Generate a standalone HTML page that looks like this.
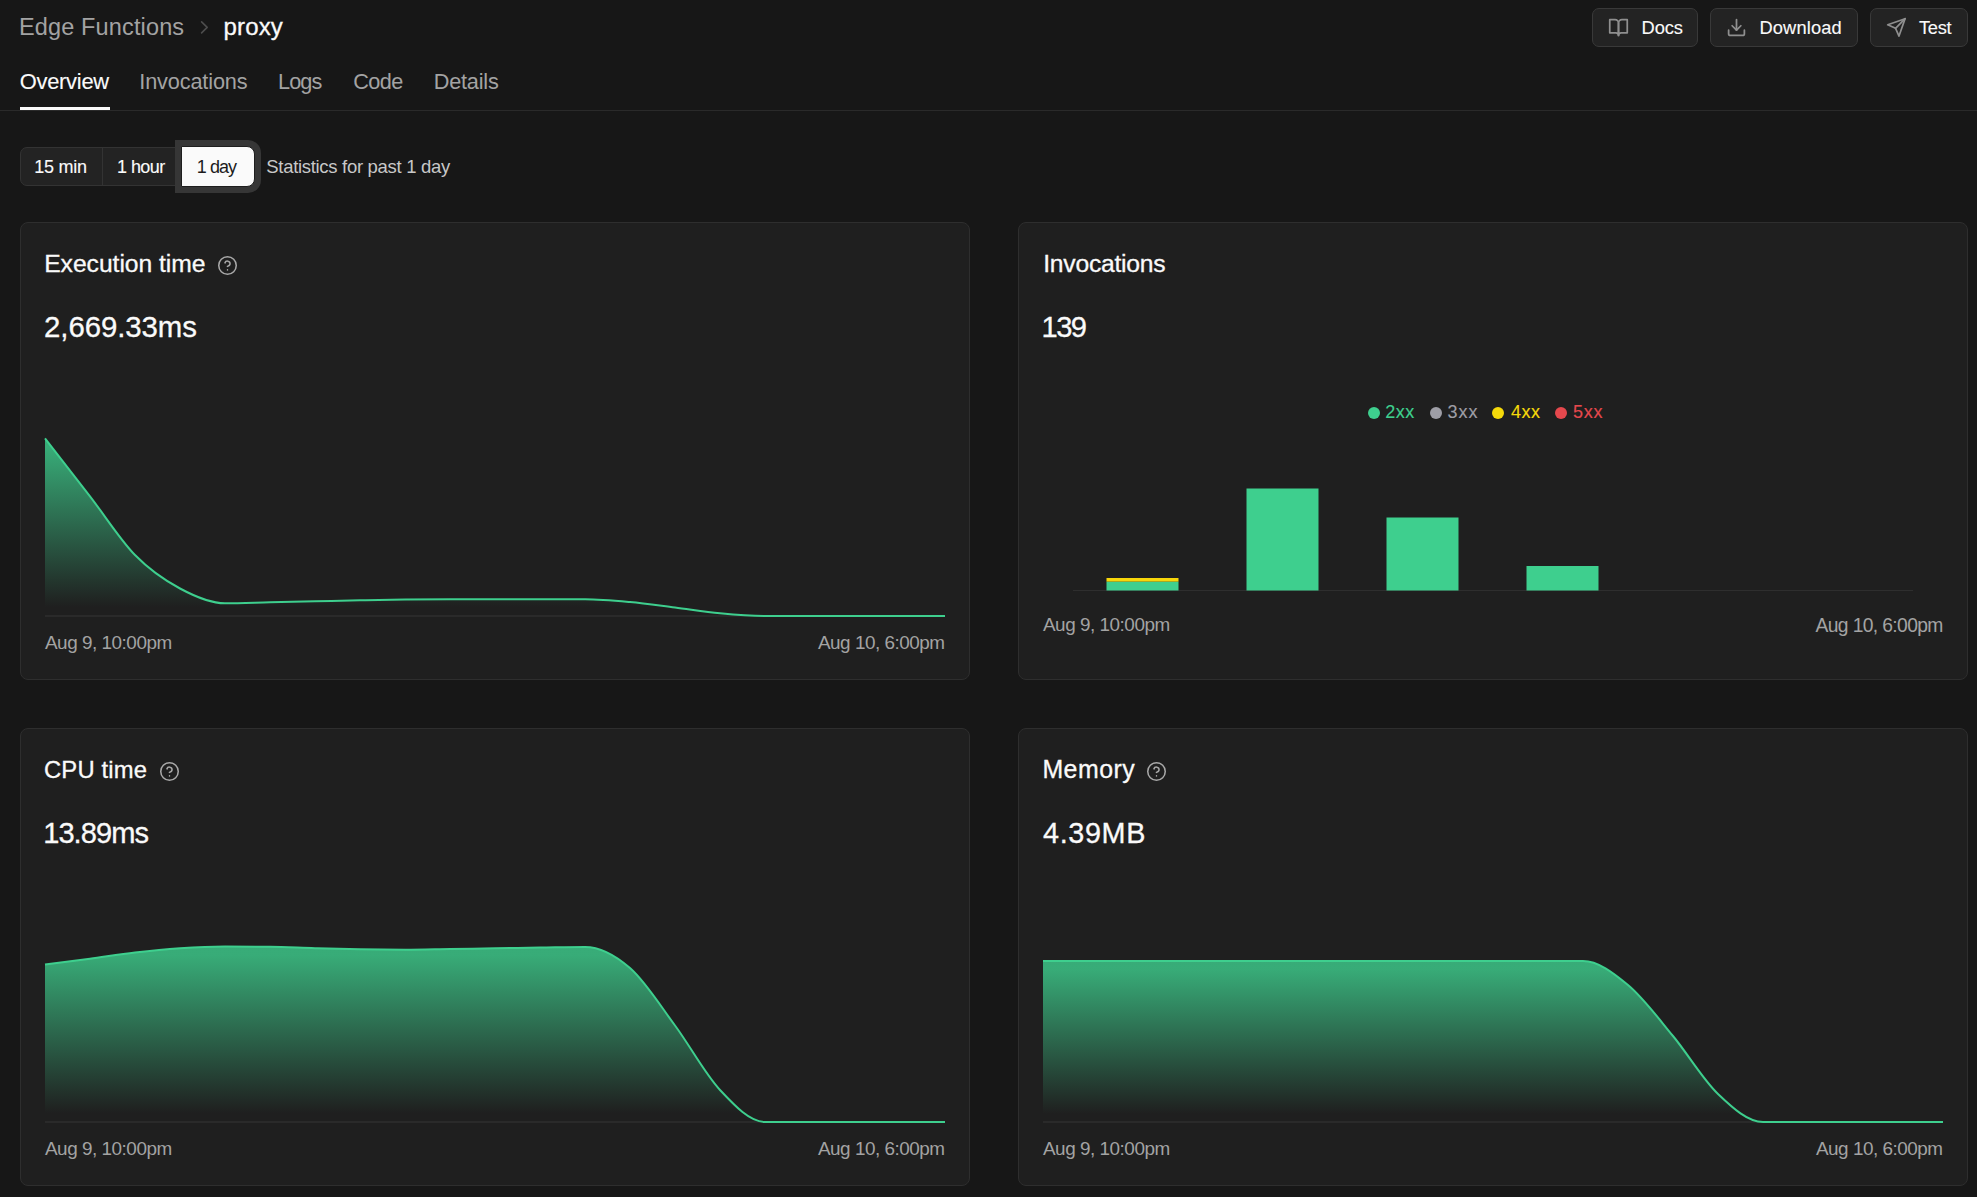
<!DOCTYPE html>
<html><head><meta charset="utf-8"><title>Edge Functions - proxy</title>
<style>
html,body{margin:0;padding:0;}
body{width:1977px;height:1197px;overflow:hidden;background:#171717;position:relative;font-family:"Liberation Sans", sans-serif;}
.t{position:absolute;white-space:nowrap;}
</style></head><body>
<div class="t" style="left:19.00px;top:16.40px;font-size:23.5px;line-height:23.5px;letter-spacing:0.138px;color:#a3a3a3;">Edge Functions</div>
<svg style="position:absolute;left:0;top:0" width="260" height="50"><path d="M201.6,21.9L207.2,27.4L201.6,32.9" fill="none" stroke="#4d4d4d" stroke-width="1.6" stroke-linecap="round" stroke-linejoin="round"/></svg>
<div class="t" style="left:223.50px;top:15.40px;font-size:24.0px;line-height:24.0px;letter-spacing:0.150px;color:#fafafa;-webkit-text-stroke:0.3px currentColor;">proxy</div>
<div style="position:absolute;left:1592px;top:8px;width:106px;height:39px;box-sizing:border-box;background:#232323;border:1px solid #393939;border-radius:7px;"></div>
<div style="position:absolute;left:1710px;top:8px;width:148px;height:39px;box-sizing:border-box;background:#232323;border:1px solid #393939;border-radius:7px;"></div>
<div style="position:absolute;left:1870px;top:8px;width:98px;height:39px;box-sizing:border-box;background:#232323;border:1px solid #393939;border-radius:7px;"></div>
<svg style="position:absolute;left:1608px;top:17px" width="21" height="21" viewBox="0 0 24 24" fill="none" stroke="#8f8f8f" stroke-width="2" stroke-linecap="round" stroke-linejoin="round"><path d="M2 3h6a4 4 0 0 1 4 4v14a3 3 0 0 0-3-3H2z"/><path d="M22 3h-6a4 4 0 0 0-4 4v14a3 3 0 0 1 3-3h7z"/></svg>
<svg style="position:absolute;left:1726px;top:16.6px" width="21" height="21" viewBox="0 0 24 24" fill="none" stroke="#8f8f8f" stroke-width="2" stroke-linecap="round" stroke-linejoin="round"><path d="M21 15v4a2 2 0 0 1-2 2H5a2 2 0 0 1-2-2v-4"/><polyline points="7 10 12 15 17 10"/><line x1="12" y1="15" x2="12" y2="3"/></svg>
<svg style="position:absolute;left:1885.8px;top:16.6px" width="20.8" height="20.8" viewBox="0 0 24 24" fill="none" stroke="#8f8f8f" stroke-width="2" stroke-linecap="round" stroke-linejoin="round"><line x1="22" y1="2" x2="11" y2="13"/><polygon points="22 2 15 22 11 13 2 9 22 2"/></svg>
<div class="t" style="left:1641.50px;top:19.20px;font-size:18.3px;line-height:18.3px;letter-spacing:-0.067px;color:#fafafa;-webkit-text-stroke:0.12px currentColor;">Docs</div>
<div class="t" style="left:1759.40px;top:19.20px;font-size:18.3px;line-height:18.3px;letter-spacing:0.143px;color:#fafafa;-webkit-text-stroke:0.12px currentColor;">Download</div>
<div class="t" style="left:1919.00px;top:19.20px;font-size:18.3px;line-height:18.3px;letter-spacing:-0.333px;color:#fafafa;-webkit-text-stroke:0.12px currentColor;">Test</div>
<div class="t" style="left:19.70px;top:70.81px;font-size:21.9px;line-height:21.9px;letter-spacing:-0.257px;color:#fafafa;-webkit-text-stroke:0.12px currentColor;">Overview</div>
<div class="t" style="left:139.30px;top:70.90px;font-size:21.7px;line-height:21.7px;letter-spacing:-0.140px;color:#a3a3a3;">Invocations</div>
<div class="t" style="left:278.00px;top:70.90px;font-size:21.7px;line-height:21.7px;letter-spacing:-0.933px;color:#a3a3a3;">Logs</div>
<div class="t" style="left:353.20px;top:70.90px;font-size:21.7px;line-height:21.7px;letter-spacing:-0.533px;color:#a3a3a3;">Code</div>
<div class="t" style="left:433.70px;top:70.90px;font-size:21.7px;line-height:21.7px;letter-spacing:-0.200px;color:#a3a3a3;">Details</div>
<div style="position:absolute;left:20px;top:107px;width:90px;height:3px;box-sizing:border-box;background:#fafafa;"></div>
<div style="position:absolute;left:0px;top:110px;width:1977px;height:1px;box-sizing:border-box;background:#2a2a2a;"></div>
<div style="position:absolute;left:20px;top:147px;width:162px;height:39px;box-sizing:border-box;background:#232323;border:1px solid #333333;border-radius:7px 0 0 7px;"></div>
<div style="position:absolute;left:102px;top:147px;width:1px;height:39px;box-sizing:border-box;background:#333333;"></div>
<div style="position:absolute;left:175px;top:140px;width:86px;height:53px;box-sizing:border-box;background:#363636;border-radius:0 13px 13px 0;"></div>
<div style="position:absolute;left:181px;top:146px;width:74px;height:41px;box-sizing:border-box;background:#fafafa;border:1px solid #1e1e1e;border-radius:0 8px 8px 0;"></div>
<div class="t" style="left:34.30px;top:157.71px;font-size:18.0px;line-height:18.0px;letter-spacing:-0.280px;color:#fafafa;-webkit-text-stroke:0.12px currentColor;">15 min</div>
<div class="t" style="left:117.00px;top:157.71px;font-size:18.0px;line-height:18.0px;letter-spacing:-0.560px;color:#fafafa;-webkit-text-stroke:0.12px currentColor;">1 hour</div>
<div class="t" style="left:196.80px;top:157.71px;font-size:18.0px;line-height:18.0px;letter-spacing:-0.950px;color:#1c1c1c;">1 day</div>
<div class="t" style="left:266.30px;top:158.10px;font-size:18.5px;line-height:18.5px;letter-spacing:-0.308px;color:#c8c8c8;">Statistics for past 1 day</div>
<div style="position:absolute;left:20px;top:222px;width:950px;height:458px;box-sizing:border-box;background:#1f1f1f;border:1px solid #2e2e2e;border-radius:8px;"></div>
<div style="position:absolute;left:1018px;top:222px;width:950px;height:458px;box-sizing:border-box;background:#1f1f1f;border:1px solid #2e2e2e;border-radius:8px;"></div>
<div style="position:absolute;left:20px;top:728px;width:950px;height:458px;box-sizing:border-box;background:#1f1f1f;border:1px solid #2e2e2e;border-radius:8px;"></div>
<div style="position:absolute;left:1018px;top:728px;width:950px;height:458px;box-sizing:border-box;background:#1f1f1f;border:1px solid #2e2e2e;border-radius:8px;"></div>
<div class="t" style="left:44.20px;top:252.11px;font-size:24.7px;line-height:24.7px;letter-spacing:-0.046px;color:#fafafa;-webkit-text-stroke:0.3px currentColor;">Execution time</div>
<div class="t" style="left:44.10px;top:312.40px;font-size:29.4px;line-height:29.4px;letter-spacing:-0.089px;color:#fafafa;-webkit-text-stroke:0.3px currentColor;">2,669.33ms</div>
<div class="t" style="left:1043.20px;top:252.11px;font-size:24.7px;line-height:24.7px;letter-spacing:-0.240px;color:#fafafa;-webkit-text-stroke:0.3px currentColor;">Invocations</div>
<div class="t" style="left:1041.50px;top:313.21px;font-size:29.1px;line-height:29.1px;letter-spacing:-1.500px;color:#fafafa;-webkit-text-stroke:0.3px currentColor;">139</div>
<div class="t" style="left:44.00px;top:758.41px;font-size:23.8px;line-height:23.8px;letter-spacing:0.171px;color:#fafafa;-webkit-text-stroke:0.3px currentColor;">CPU time</div>
<div class="t" style="left:43.20px;top:819.11px;font-size:29.1px;line-height:29.1px;letter-spacing:-0.967px;color:#fafafa;-webkit-text-stroke:0.3px currentColor;">13.89ms</div>
<div class="t" style="left:1042.40px;top:757.11px;font-size:24.9px;line-height:24.9px;letter-spacing:0.480px;color:#fafafa;-webkit-text-stroke:0.3px currentColor;">Memory</div>
<div class="t" style="left:1043.10px;top:819.00px;font-size:28.8px;line-height:28.8px;letter-spacing:0.600px;color:#fafafa;-webkit-text-stroke:0.3px currentColor;">4.39MB</div>
<svg style="position:absolute;left:217.0px;top:255.0px" width="21" height="21" viewBox="0 0 24 24" fill="none" stroke="#a8a8a8" stroke-width="1.75" stroke-linecap="round" stroke-linejoin="round"><circle cx="12" cy="12" r="10"/><path d="M9.09 9a3 3 0 0 1 5.83 1c0 2-3 3-3 3"/><path d="M12 17h.01"/></svg>
<svg style="position:absolute;left:159.0px;top:761.0px" width="21" height="21" viewBox="0 0 24 24" fill="none" stroke="#a8a8a8" stroke-width="1.75" stroke-linecap="round" stroke-linejoin="round"><circle cx="12" cy="12" r="10"/><path d="M9.09 9a3 3 0 0 1 5.83 1c0 2-3 3-3 3"/><path d="M12 17h.01"/></svg>
<svg style="position:absolute;left:1146.0px;top:761.0px" width="21" height="21" viewBox="0 0 24 24" fill="none" stroke="#a8a8a8" stroke-width="1.75" stroke-linecap="round" stroke-linejoin="round"><circle cx="12" cy="12" r="10"/><path d="M9.09 9a3 3 0 0 1 5.83 1c0 2-3 3-3 3"/><path d="M12 17h.01"/></svg>
<div class="t" style="left:45.00px;top:634.10px;font-size:18.9px;line-height:18.9px;letter-spacing:-0.477px;color:#a3a3a3;">Aug 9, 10:00pm</div>
<div class="t" style="left:818.00px;top:634.10px;font-size:18.9px;line-height:18.9px;letter-spacing:-0.492px;color:#a3a3a3;">Aug 10, 6:00pm</div>
<div class="t" style="left:1043.00px;top:616.01px;font-size:18.9px;line-height:18.9px;letter-spacing:-0.477px;color:#a3a3a3;">Aug 9, 10:00pm</div>
<div class="t" style="left:1815.50px;top:615.50px;font-size:19.3px;line-height:19.3px;letter-spacing:-0.631px;color:#a3a3a3;">Aug 10, 6:00pm</div>
<div class="t" style="left:45.00px;top:1140.01px;font-size:18.9px;line-height:18.9px;letter-spacing:-0.477px;color:#a3a3a3;">Aug 9, 10:00pm</div>
<div class="t" style="left:818.00px;top:1140.01px;font-size:18.9px;line-height:18.9px;letter-spacing:-0.492px;color:#a3a3a3;">Aug 10, 6:00pm</div>
<div class="t" style="left:1043.00px;top:1140.01px;font-size:18.9px;line-height:18.9px;letter-spacing:-0.477px;color:#a3a3a3;">Aug 9, 10:00pm</div>
<div class="t" style="left:1816.00px;top:1140.01px;font-size:18.9px;line-height:18.9px;letter-spacing:-0.492px;color:#a3a3a3;">Aug 10, 6:00pm</div>
<svg style="position:absolute;left:0;top:0" width="1977" height="1197"><defs><linearGradient id="g" x1="0" y1="0" x2="0" y2="1"><stop offset="5%" stop-color="#3ecf8e" stop-opacity="0.8"/><stop offset="95%" stop-color="#3ecf8e" stop-opacity="0"/></linearGradient></defs><line x1="45" y1="616" x2="945" y2="616" stroke="#363636" stroke-width="1"/><path d="M45.00,438.30C60.00,457.57,75.00,476.85,90.00,496.30C105.00,515.75,120.00,539.63,135.00,555.00C150.00,570.37,165.00,580.45,180.00,588.50C195.00,596.55,210.00,603.30,225.00,603.30C240.00,603.30,255.00,602.63,270.00,602.30C285.00,601.97,300.00,601.63,315.00,601.30C330.00,600.97,345.00,600.60,360.00,600.30C375.00,600.00,390.00,599.68,405.00,599.50C420.00,599.32,435.00,599.20,450.00,599.20C465.00,599.20,480.00,599.20,495.00,599.20C510.00,599.20,525.00,599.20,540.00,599.20C555.00,599.20,570.00,599.20,585.00,599.20C600.00,599.20,615.00,600.62,630.00,602.00C645.00,603.38,660.00,605.62,675.00,607.50C690.00,609.38,705.00,611.88,720.00,613.30C735.00,614.72,750.00,616.00,765.00,616.00C780.00,616.00,795.00,616.00,810.00,616.00C825.00,616.00,840.00,616.00,855.00,616.00C870.00,616.00,885.00,616.00,900.00,616.00C915.00,616.00,930.00,616.00,945.00,616.00L945,616L45,616Z" fill="url(#g)"/><path d="M45.00,438.30C60.00,457.57,75.00,476.85,90.00,496.30C105.00,515.75,120.00,539.63,135.00,555.00C150.00,570.37,165.00,580.45,180.00,588.50C195.00,596.55,210.00,603.30,225.00,603.30C240.00,603.30,255.00,602.63,270.00,602.30C285.00,601.97,300.00,601.63,315.00,601.30C330.00,600.97,345.00,600.60,360.00,600.30C375.00,600.00,390.00,599.68,405.00,599.50C420.00,599.32,435.00,599.20,450.00,599.20C465.00,599.20,480.00,599.20,495.00,599.20C510.00,599.20,525.00,599.20,540.00,599.20C555.00,599.20,570.00,599.20,585.00,599.20C600.00,599.20,615.00,600.62,630.00,602.00C645.00,603.38,660.00,605.62,675.00,607.50C690.00,609.38,705.00,611.88,720.00,613.30C735.00,614.72,750.00,616.00,765.00,616.00C780.00,616.00,795.00,616.00,810.00,616.00C825.00,616.00,840.00,616.00,855.00,616.00C870.00,616.00,885.00,616.00,900.00,616.00C915.00,616.00,930.00,616.00,945.00,616.00" fill="none" stroke="#3ecf8e" stroke-width="2"/><line x1="45" y1="1122" x2="945" y2="1122" stroke="#363636" stroke-width="1"/><path d="M45.00,964.60C60.00,962.66,75.00,960.72,90.00,958.70C105.00,956.68,120.00,954.25,135.00,952.50C150.00,950.75,165.00,949.22,180.00,948.20C195.00,947.18,210.00,946.40,225.00,946.40C240.00,946.40,255.00,946.53,270.00,946.80C285.00,947.07,300.00,947.78,315.00,948.20C330.00,948.62,345.00,949.05,360.00,949.30C375.00,949.55,390.00,949.70,405.00,949.70C420.00,949.70,435.00,949.23,450.00,949.00C465.00,948.77,480.00,948.53,495.00,948.30C510.00,948.07,525.00,947.83,540.00,947.60C555.00,947.37,570.00,946.90,585.00,946.90C600.00,946.90,615.00,954.90,630.00,968.00C645.00,981.10,660.00,1005.17,675.00,1025.50C690.00,1045.83,705.00,1073.92,720.00,1090.00C735.00,1106.08,750.00,1122.00,765.00,1122.00C780.00,1122.00,795.00,1122.00,810.00,1122.00C825.00,1122.00,840.00,1122.00,855.00,1122.00C870.00,1122.00,885.00,1122.00,900.00,1122.00C915.00,1122.00,930.00,1122.00,945.00,1122.00L945,1122L45,1122Z" fill="url(#g)"/><path d="M45.00,964.60C60.00,962.66,75.00,960.72,90.00,958.70C105.00,956.68,120.00,954.25,135.00,952.50C150.00,950.75,165.00,949.22,180.00,948.20C195.00,947.18,210.00,946.40,225.00,946.40C240.00,946.40,255.00,946.53,270.00,946.80C285.00,947.07,300.00,947.78,315.00,948.20C330.00,948.62,345.00,949.05,360.00,949.30C375.00,949.55,390.00,949.70,405.00,949.70C420.00,949.70,435.00,949.23,450.00,949.00C465.00,948.77,480.00,948.53,495.00,948.30C510.00,948.07,525.00,947.83,540.00,947.60C555.00,947.37,570.00,946.90,585.00,946.90C600.00,946.90,615.00,954.90,630.00,968.00C645.00,981.10,660.00,1005.17,675.00,1025.50C690.00,1045.83,705.00,1073.92,720.00,1090.00C735.00,1106.08,750.00,1122.00,765.00,1122.00C780.00,1122.00,795.00,1122.00,810.00,1122.00C825.00,1122.00,840.00,1122.00,855.00,1122.00C870.00,1122.00,885.00,1122.00,900.00,1122.00C915.00,1122.00,930.00,1122.00,945.00,1122.00" fill="none" stroke="#3ecf8e" stroke-width="2"/><line x1="1043" y1="1122" x2="1943" y2="1122" stroke="#363636" stroke-width="1"/><path d="M1043.00,961.00C1058.00,961.00,1073.00,961.00,1088.00,961.00C1103.00,961.00,1118.00,961.00,1133.00,961.00C1148.00,961.00,1163.00,961.00,1178.00,961.00C1193.00,961.00,1208.00,961.00,1223.00,961.00C1238.00,961.00,1253.00,961.00,1268.00,961.00C1283.00,961.00,1298.00,961.00,1313.00,961.00C1328.00,961.00,1343.00,961.00,1358.00,961.00C1373.00,961.00,1388.00,961.00,1403.00,961.00C1418.00,961.00,1433.00,961.00,1448.00,961.00C1463.00,961.00,1478.00,961.00,1493.00,961.00C1508.00,961.00,1523.00,961.00,1538.00,961.00C1553.00,961.00,1568.00,961.00,1583.00,961.00C1598.00,961.00,1613.00,972.50,1628.00,985.00C1643.00,997.50,1658.00,1017.83,1673.00,1036.00C1688.00,1054.17,1703.00,1079.67,1718.00,1094.00C1733.00,1108.33,1748.00,1122.00,1763.00,1122.00C1778.00,1122.00,1793.00,1122.00,1808.00,1122.00C1823.00,1122.00,1838.00,1122.00,1853.00,1122.00C1868.00,1122.00,1883.00,1122.00,1898.00,1122.00C1913.00,1122.00,1928.00,1122.00,1943.00,1122.00L1943,1122L1043,1122Z" fill="url(#g)"/><path d="M1043.00,961.00C1058.00,961.00,1073.00,961.00,1088.00,961.00C1103.00,961.00,1118.00,961.00,1133.00,961.00C1148.00,961.00,1163.00,961.00,1178.00,961.00C1193.00,961.00,1208.00,961.00,1223.00,961.00C1238.00,961.00,1253.00,961.00,1268.00,961.00C1283.00,961.00,1298.00,961.00,1313.00,961.00C1328.00,961.00,1343.00,961.00,1358.00,961.00C1373.00,961.00,1388.00,961.00,1403.00,961.00C1418.00,961.00,1433.00,961.00,1448.00,961.00C1463.00,961.00,1478.00,961.00,1493.00,961.00C1508.00,961.00,1523.00,961.00,1538.00,961.00C1553.00,961.00,1568.00,961.00,1583.00,961.00C1598.00,961.00,1613.00,972.50,1628.00,985.00C1643.00,997.50,1658.00,1017.83,1673.00,1036.00C1688.00,1054.17,1703.00,1079.67,1718.00,1094.00C1733.00,1108.33,1748.00,1122.00,1763.00,1122.00C1778.00,1122.00,1793.00,1122.00,1808.00,1122.00C1823.00,1122.00,1838.00,1122.00,1853.00,1122.00C1868.00,1122.00,1883.00,1122.00,1898.00,1122.00C1913.00,1122.00,1928.00,1122.00,1943.00,1122.00" fill="none" stroke="#3ecf8e" stroke-width="2"/><line x1="1073" y1="590.5" x2="1913" y2="590.5" stroke="#2e2e2e" stroke-width="1"/><rect x="1106.5" y="581.6" width="72" height="8.9" fill="#3ecf8e"/><rect x="1106.5" y="578" width="72" height="3.6" fill="#f7d60a"/><rect x="1246.5" y="488.5" width="72" height="102" fill="#3ecf8e"/><rect x="1386.5" y="517.5" width="72" height="73" fill="#3ecf8e"/><rect x="1526.5" y="566" width="72" height="24.5" fill="#3ecf8e"/><circle cx="1374" cy="413" r="6" fill="#3ecf8e"/><circle cx="1436" cy="413" r="6" fill="#9e9ea6"/><circle cx="1498" cy="413" r="6" fill="#f5d90a"/><circle cx="1561" cy="413" r="6" fill="#e5484d"/></svg>
<div class="t" style="left:1385.30px;top:403.10px;font-size:18.0px;line-height:18.0px;letter-spacing:0.500px;color:#3ecf8e;-webkit-text-stroke:0.12px currentColor;">2xx</div>
<div class="t" style="left:1447.50px;top:403.10px;font-size:18.0px;line-height:18.0px;letter-spacing:1.000px;color:#9e9ea6;-webkit-text-stroke:0.12px currentColor;">3xx</div>
<div class="t" style="left:1510.90px;top:403.10px;font-size:18.0px;line-height:18.0px;letter-spacing:0.500px;color:#f5d90a;-webkit-text-stroke:0.12px currentColor;">4xx</div>
<div class="t" style="left:1572.90px;top:403.10px;font-size:18.0px;line-height:18.0px;letter-spacing:0.800px;color:#e5484d;-webkit-text-stroke:0.12px currentColor;">5xx</div>
</body></html>
